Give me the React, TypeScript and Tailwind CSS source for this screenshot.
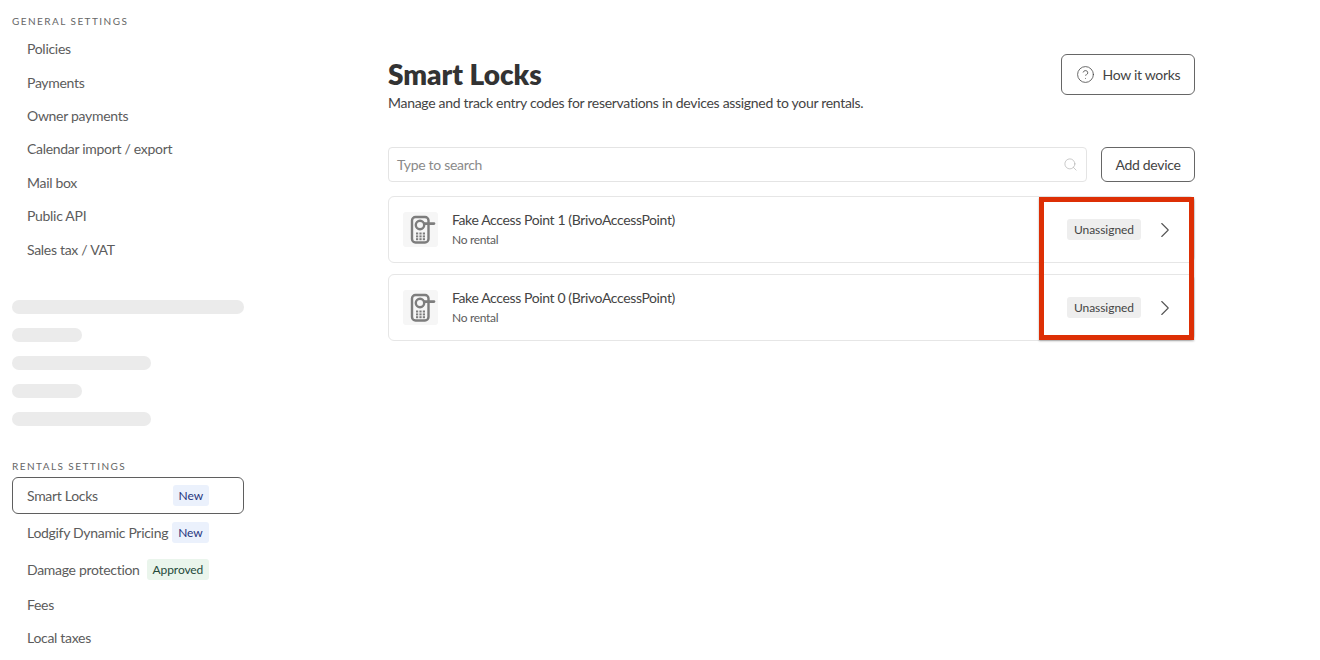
import React from 'react';
import { ChevronRight, CircleHelp, Search } from 'lucide-react';

const generalLinks = ['Policies', 'Payments', 'Owner payments', 'Calendar import / export', 'Mail box', 'Public API', 'Sales tax / VAT'];
const skeletons = ['w-full', 'w-[70px]', 'w-[139px]', 'w-[70px]', 'w-[139px]'];
const devices = ['Fake Access Point 1 (BrivoAccessPoint)', 'Fake Access Point 0 (BrivoAccessPoint)'];

const LockIcon = () => (
  <svg width="35" height="35" viewBox="0 0 35 35" fill="none" className="shrink-0 rounded-[3px] bg-[#f6f6f6]">
    <rect x="9" y="5" width="16.5" height="25.5" rx="3.5" stroke="#7d7d7d" strokeWidth="2.4" />
    <path d="M18 11.6h13" stroke="#7d7d7d" strokeWidth="2.6" strokeLinecap="round" />
    <circle cx="17" cy="13" r="4.2" fill="#f6f6f6" stroke="#7d7d7d" strokeWidth="2.4" />
    <g fill="#7d7d7d">
      <rect x="13" y="20.5" width="2.2" height="2" />
      <rect x="16.4" y="20.5" width="2.2" height="2" />
      <rect x="19.8" y="20.5" width="2.2" height="2" />
      <rect x="13" y="23.4" width="2.2" height="2" />
      <rect x="16.4" y="23.4" width="2.2" height="2" />
      <rect x="19.8" y="23.4" width="2.2" height="2" />
      <rect x="13" y="26.2" width="2.2" height="2" />
      <rect x="16.4" y="26.2" width="2.2" height="2" />
      <rect x="19.8" y="26.2" width="2.2" height="2" />
    </g>
  </svg>
);

const Sidebar = () => (
  <aside className="ml-3 w-[232px] shrink-0 text-[14px] text-[#5c5c5c]">
    <div className="mt-[14px] text-[10px] leading-[14px] tracking-[1.45px] text-[#666]">GENERAL SETTINGS</div>
    <ul className="mt-[4px]">
      {generalLinks.map((link) => (
        <li key={link} className="flex h-[33.4px] items-center pl-[15px]">{link}</li>
      ))}
    </ul>
    <div className="mt-[34px] flex flex-col gap-[14px]">
      {skeletons.map((w, i) => (
        <div key={i} className={`h-[14px] rounded-full bg-[#ebebeb] ${w}`} />
      ))}
    </div>
    <div className="mt-[33px] text-[10px] leading-[14px] tracking-[1.45px] text-[#666]">RENTALS SETTINGS</div>
    <div className="mt-[4px] flex h-[37px] items-center rounded-[6px] border border-[#5f5f5f] pl-[14px]">
      <span>Smart Locks</span>
      <span className="ml-[auto] mr-[34px] rounded-[3px] bg-[#ebf1fc] px-[6px] py-[2px] text-[12px] leading-[17px] tracking-[-0.1px] text-[#27367e]">New</span>
    </div>
    <div className="flex h-[37px] items-center pl-[15px]">
      <span>Lodgify Dynamic Pricing</span>
      <span className="ml-[4px] rounded-[3px] bg-[#ebf1fc] px-[6px] py-[2px] text-[12px] leading-[17px] tracking-[-0.1px] text-[#27367e]">New</span>
    </div>
    <div className="flex h-[37px] items-center pl-[15px]">
      <span>Damage protection</span>
      <span className="ml-[7px] rounded-[3px] bg-[#eaf5ec] px-[6px] py-[2px] text-[12px] leading-[17px] tracking-[-0.1px] text-[#25493a]">Approved</span>
    </div>
    <div className="flex h-[33.4px] items-center pl-[15px]">Fees</div>
    <div className="flex h-[33.4px] items-center pl-[15px]">Local taxes</div>
  </aside>
);

export default function App() {
  return (
    <div className="relative flex h-[660px] w-[1320px] overflow-hidden bg-white font-['Lato',sans-serif] tracking-[-0.3px]">
      <Sidebar />
      <main className="ml-[144px] w-[807px] shrink-0">
        <div className="flex items-start justify-between pt-[54px]">
          <div>
            <h1 className="mt-[2px] mb-[1px] text-[28px] font-extrabold leading-[36px] tracking-normal text-[#333]">Smart Locks</h1>
            <p className="text-[14px] leading-[20px] text-[#444]">Manage and track entry codes for reservations in devices assigned to your rentals.</p>
          </div>
          <button className="flex h-[41px] w-[134px] items-center justify-center gap-[8px] rounded-[6px] border border-[#666] text-[14px] text-[#444]">
            <CircleHelp size={19} strokeWidth={1} />
            How it works
          </button>
        </div>
        <div className="mt-[34px] flex gap-[14px]">
          <div className="flex h-[35px] flex-1 items-center justify-between rounded-[4px] border border-[#e4e4e4] pl-[8px] pr-[8px] text-[14px] text-[#8a8a8a]">
            <span>Type to search</span>
            <Search size={15} strokeWidth={1} className="text-[#aaa]" />
          </div>
          <button className="h-[35px] w-[94px] rounded-[6px] border border-[#666] text-[14px] text-[#444]">Add device</button>
        </div>
        <div className="mt-[14px] flex flex-col gap-[11px]">
          {devices.map((name) => (
            <div key={name} className="flex h-[67px] items-center rounded-[6px] border border-[#e6e6e6] pl-[14px] pr-[16px]">
              <LockIcon />
              <div className="ml-[14px]">
                <div className="text-[14px] leading-[20px] tracking-[-0.38px] text-[#444]">{name}</div>
                <div className="mt-[1px] text-[12px] leading-[18px] text-[#5c5c5c]">No rental</div>
              </div>
              <span className="ml-auto rounded-[3px] bg-[#eeeeee] px-[7px] py-[2px] text-[12px] leading-[17px] tracking-[-0.05px] text-[#444]">Unassigned</span>
              <ChevronRight size={26} strokeWidth={1} className="ml-[11px] text-[#555]" />
            </div>
          ))}
        </div>
      </main>
      <div className="absolute left-[1039px] top-[197px] h-[143px] w-[155px] border-[5px] border-[#dd2f05] shadow-[0_1px_2px_rgba(0,0,0,0.3)]" />
    </div>
  );
}
